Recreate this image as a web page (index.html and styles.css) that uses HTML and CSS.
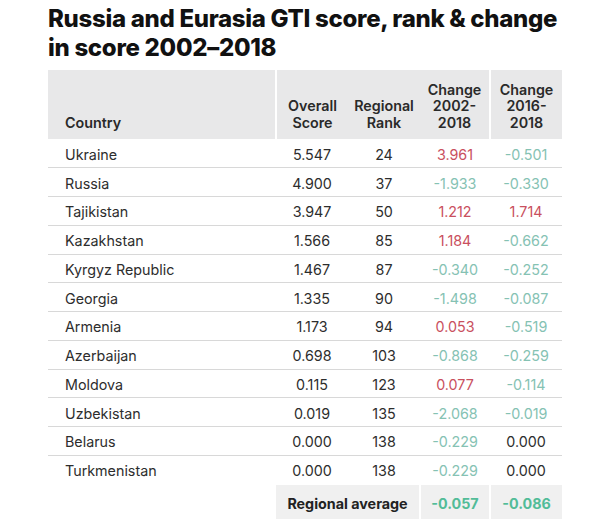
FILE: index.html
```html
<!DOCTYPE html>
<html>
<head>
<meta charset="utf-8">
<link rel="stylesheet" href="styles.css">
</head>
<body>
<div class="page">
  <h1 class="title">Russia and Eurasia GTI score, rank &amp; change in score 2002–2018</h1>
  <table class="gti">
    <colgroup>
      <col class="c-country"><col class="c-num"><col class="c-num"><col class="c-chg"><col class="c-num">
    </colgroup>
    <thead>
      <tr>
        <th class="th-country">Country</th>
        <th class="div-left">Overall<br>Score</th>
        <th>Regional<br>Rank</th>
        <th>Change<br>2002-<br>2018</th>
        <th class="div-left">Change<br>2016-<br>2018</th>
      </tr>
    </thead>
    <tbody>
      <tr><td class="country">Ukraine</td><td>5.547</td><td>24</td><td class="up">3.961</td><td class="down">-0.501</td></tr>
      <tr><td class="country">Russia</td><td>4.900</td><td>37</td><td class="down">-1.933</td><td class="down">-0.330</td></tr>
      <tr><td class="country">Tajikistan</td><td>3.947</td><td>50</td><td class="up">1.212</td><td class="up">1.714</td></tr>
      <tr><td class="country">Kazakhstan</td><td>1.566</td><td>85</td><td class="up">1.184</td><td class="down">-0.662</td></tr>
      <tr><td class="country">Kyrgyz Republic</td><td>1.467</td><td>87</td><td class="down">-0.340</td><td class="down">-0.252</td></tr>
      <tr><td class="country">Georgia</td><td>1.335</td><td>90</td><td class="down">-1.498</td><td class="down">-0.087</td></tr>
      <tr><td class="country">Armenia</td><td>1.173</td><td>94</td><td class="up">0.053</td><td class="down">-0.519</td></tr>
      <tr><td class="country">Azerbaijan</td><td>0.698</td><td>103</td><td class="down">-0.868</td><td class="down">-0.259</td></tr>
      <tr><td class="country">Moldova</td><td>0.115</td><td>123</td><td class="up">0.077</td><td class="down">-0.114</td></tr>
      <tr><td class="country">Uzbekistan</td><td>0.019</td><td>135</td><td class="down">-2.068</td><td class="down">-0.019</td></tr>
      <tr><td class="country">Belarus</td><td>0.000</td><td>138</td><td class="down">-0.229</td><td>0.000</td></tr>
      <tr><td class="country">Turkmenistan</td><td>0.000</td><td>138</td><td class="down">-0.229</td><td>0.000</td></tr>
    </tbody>
    <tfoot>
      <tr>
        <td class="blank"></td>
        <td class="avg-label" colspan="2">Regional average</td>
        <td class="avg div-left">-0.057</td>
        <td class="avg div-left">-0.086</td>
      </tr>
    </tfoot>
  </table>
</div>
</body>
</html>
```
FILE: styles.css
```css
html, body {
  margin: 0;
  padding: 0;
  background: #ffffff;
}
body {
  font-family: "Inter", "Liberation Sans", sans-serif;
  color: #2b2b2b;
}
.page {
  padding: 4px 0 0 48px;
  width: 514px;
}
.title {
  margin: 0;
  font-size: 24px;
  line-height: 29px;
  font-weight: 800;
  letter-spacing: -0.3px;
  color: #111111;
  width: 520px;
}
.gti {
  margin-top: 8px;
  width: 514px;
  border-collapse: collapse;
  table-layout: fixed;
  font-size: 14.3px;
}
.c-country { width: 228px; }
.c-num { width: 72px; }
.c-chg { width: 70px; }
thead th {
  background: #e8e8e9;
  height: 69px;
  padding: 0 0 8px 0;
  vertical-align: bottom;
  text-align: center;
  font-weight: 600;
  line-height: 16.5px;
  color: #2a2a2a;
  box-sizing: border-box;
}
thead th.th-country {
  text-align: left;
  padding-left: 17px;
}
.div-left {
  border-left: 2px solid #ffffff;
}
tbody td {
  height: 28.75px;
  padding: 0;
  text-align: center;
  border-bottom: 1px solid #d8d8d8;
  box-sizing: border-box;
  color: #2d2d2d;
  padding-top: 2px;
}
tbody td.country {
  text-align: left;
  padding-left: 17px;
}
td.up { color: #c9505e; }
td.down { color: #85c2b3; }
tfoot td {
  height: 36px;
  padding: 0 0 2px 0;
  text-align: center;
  font-weight: 700;
}
tfoot tr { border-top: 2px solid #ffffff; }
tfoot td.blank { background: #ffffff; }
tfoot td.avg-label {
  background: #f0f0f0;
  color: #222222;
}
tfoot td.avg {
  background: #f0f0f0;
  color: #52bc98;
}
```
